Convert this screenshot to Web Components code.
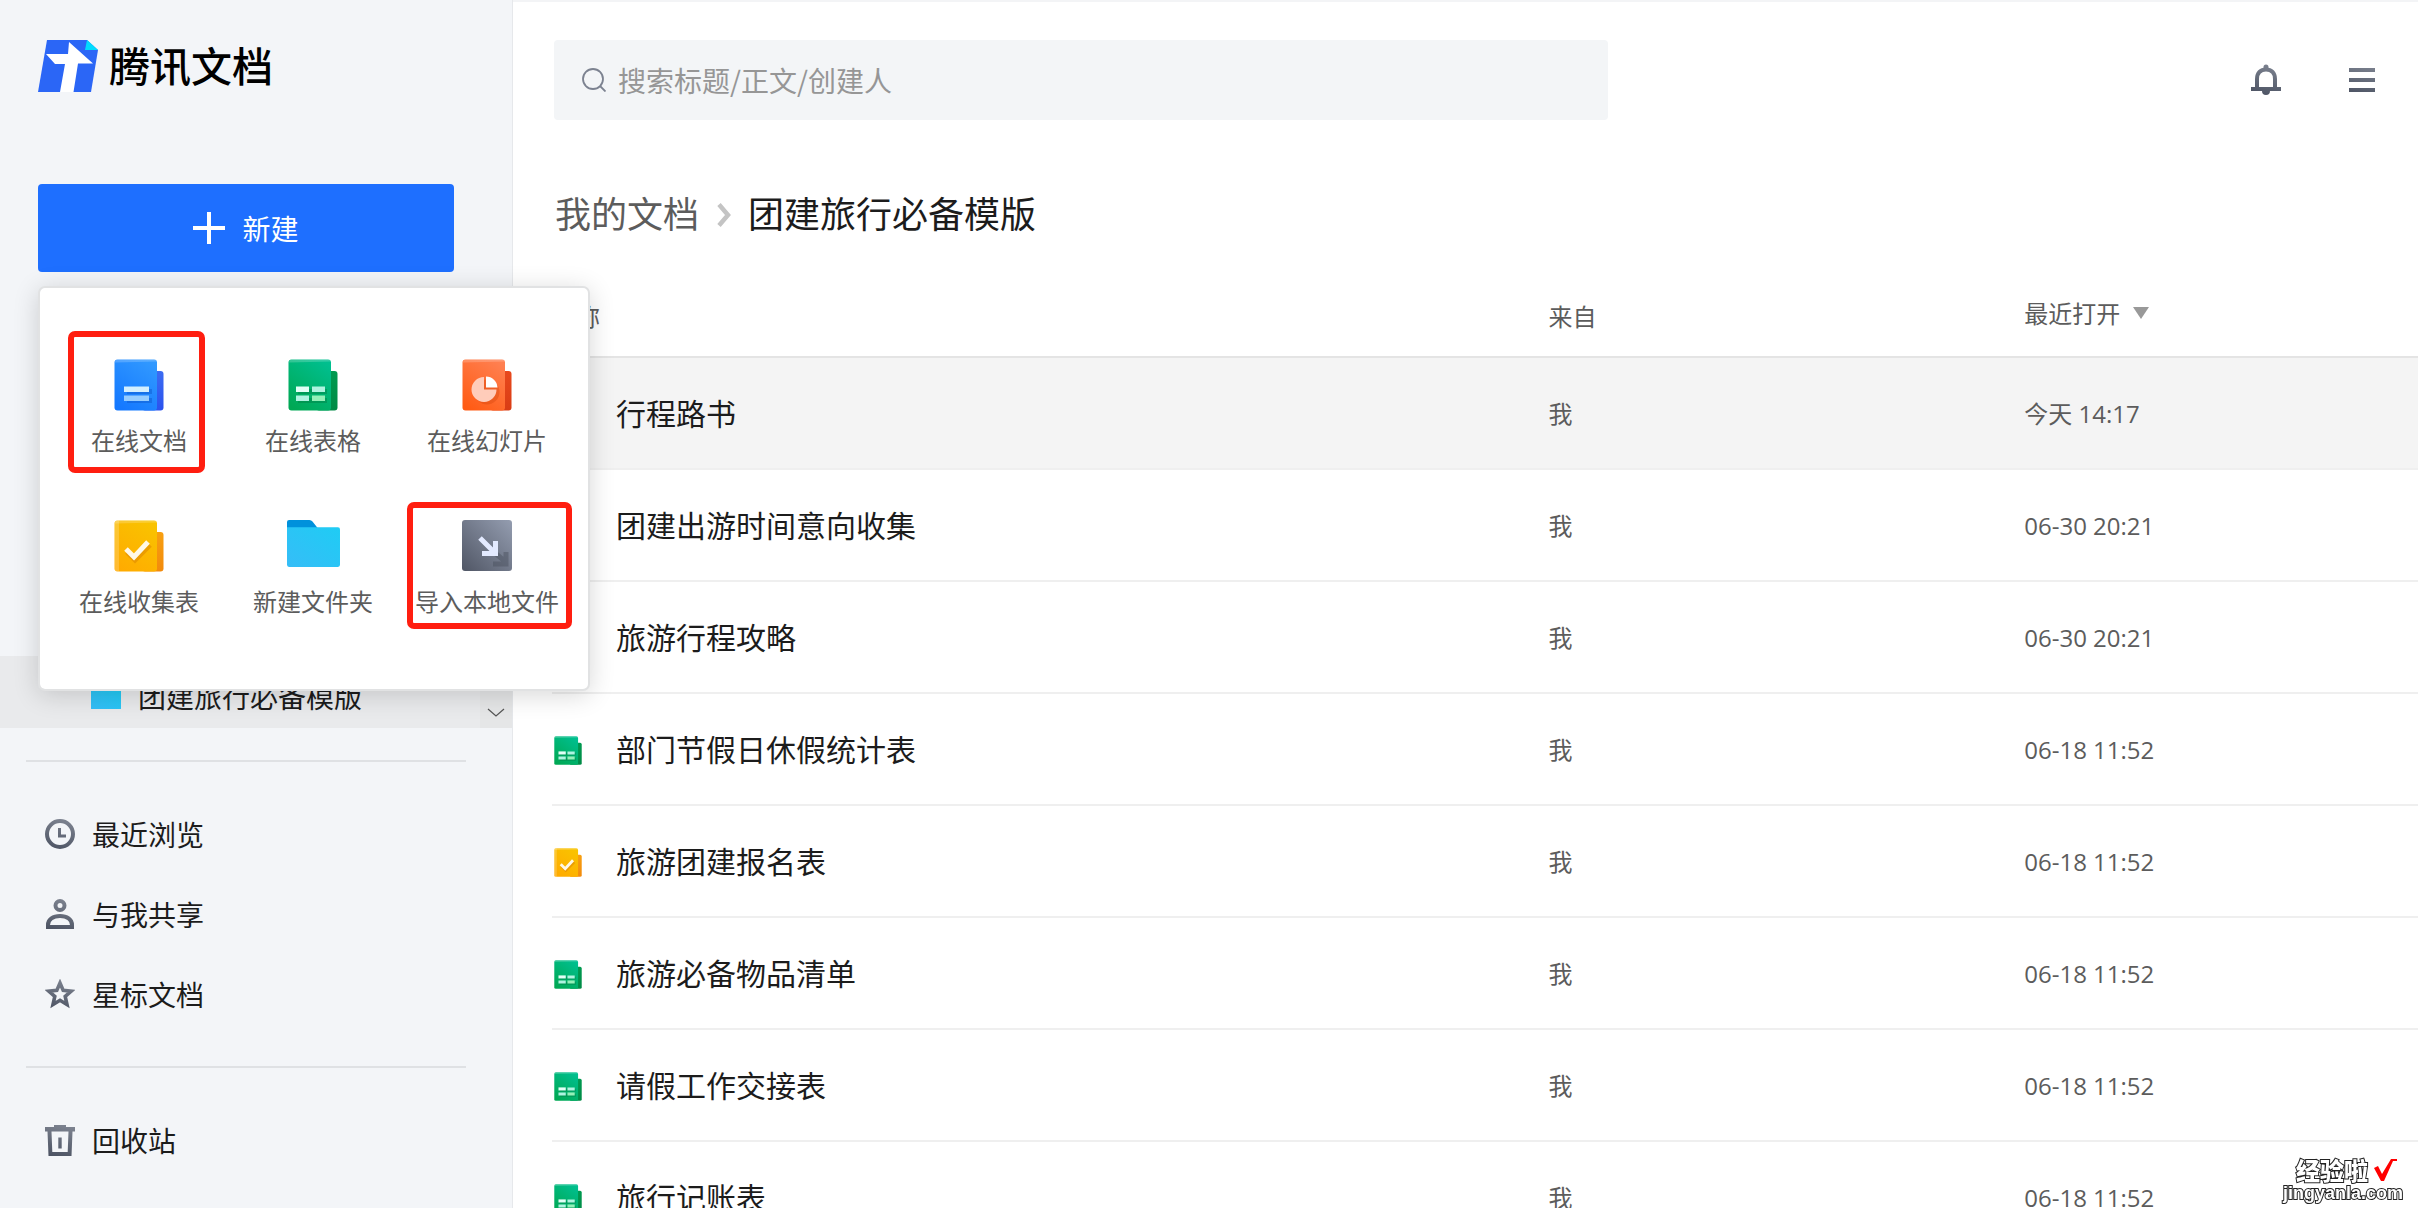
<!DOCTYPE html>
<html lang="zh-CN">
<head>
<meta charset="utf-8">
<title>腾讯文档</title>
<style>
  html, body { margin: 0; height: 100%; }
  body {
    font-family: "Noto Sans CJK SC", sans-serif;
    font-size: 28px;
    color: #1c1c1c;
    background: #fff;
    overflow: hidden;
  }
</style>
</head>
<body>
<docs-app>
  <docs-sidebar slot="side">
    <new-menu slot="create">
      <menu-tile icon="doc">在线文档</menu-tile>
      <menu-tile icon="sheet">在线表格</menu-tile>
      <menu-tile icon="slide">在线幻灯片</menu-tile>
      <menu-tile icon="form">在线收集表</menu-tile>
      <menu-tile icon="folder">新建文件夹</menu-tile>
      <menu-tile icon="import">导入本地文件</menu-tile>
    </new-menu>
    <side-item slot="tree" icon="folder" nested active>团建旅行必备模版</side-item>
    <side-item slot="main" icon="clock">最近浏览</side-item>
    <side-item slot="main" icon="person">与我共享</side-item>
    <side-item slot="main" icon="star">星标文档</side-item>
    <side-item slot="foot" icon="trash">回收站</side-item>
  </docs-sidebar>
  <docs-topbar></docs-topbar>
  <docs-breadcrumb><a slot="parent" href="#">我的文档</a>团建旅行必备模版</docs-breadcrumb>
  <file-table></file-table>
</docs-app>
<site-mark></site-mark>

<script>
const define = (name, html, setup) => {
  const template = document.createElement('template');
  template.innerHTML = html;
  customElements.define(name, class extends HTMLElement {
    connectedCallback() {
      if (this.shadowRoot) return;
      const root = this.attachShadow({ mode: 'open' });
      root.append(template.content.cloneNode(true));
      if (setup) setup(this, root);
    }
  });
};

const makeIcon = (name) => {
  const icon = document.createElement('docs-icon');
  icon.setAttribute('name', name);
  return icon;
};

const sheetBody = (top, bottom, backTop, backBottom, mark) => `
<svg viewBox="0 0 50 52" aria-hidden="true">
  <defs>
    <linearGradient id="a" x1=".8" y1="0" x2=".2" y2="1"><stop stop-color="${top}"/><stop offset="1" stop-color="${bottom}"/></linearGradient>
    <linearGradient id="b" x1="0" y1="0" x2="0" y2="1"><stop stop-color="${backTop}"/><stop offset="1" stop-color="${backBottom}"/></linearGradient>
  </defs>
  <rect x="28" y="12" width="21.5" height="39.5" rx="3" fill="url(#b)"/>
  <rect x=".5" y=".5" width="42.5" height="51" rx="3" fill="url(#a)"/>
  <path d="M1 3.500a3 3 0 0 1 3-3h36a3 3 0 0 1 3 2z" fill="#fff" opacity=".2"/>
  ${mark}
</svg>`;

const ink = `<defs><linearGradient id="k" gradientUnits="userSpaceOnUse" x1="20" y1="0" x2="12" y2="32"><stop stop-color="#7d8390"/><stop offset="1" stop-color="#4c5363"/></linearGradient></defs>`;

const ICONS = {
  doc: sheetBody('#3199ff', '#1478ff', '#3c6cf2', '#2b52ee',
    `<path d="M13 30h25v5H13zM13 39h25v5H13z" fill="#0b4fc4" opacity=".4"/>
     <path d="M10 27.500h25v5.500H10z" fill="#d3efff"/><path d="M10 36.500h25v5.500H10z" fill="#96cdff"/>`),
  sheet: sheetBody('#00bf8f', '#00a854', '#009a50', '#008a45',
    `<path d="M10 30h29v5H10zM10 39h29v5H10z" fill="#00703a" opacity=".35"/>
     <path d="M8 27.500h13v5.500H8z" fill="#e2fff6"/><path d="M24 27.500h13v5.500H24zM8 36.500h13v5.500H8z" fill="#aef3e0"/><path d="M24 36.500h13v5.500H24z" fill="#93f0b8"/>`),
  slide: sheetBody('#ff8051', '#ff5b14', '#e8491d', '#d93c14',
    `<circle cx="25" cy="33" r="12.500" fill="#c83a08" opacity=".3"/>
     <path d="M22 18a12.500 12.500 0 1 0 12.500 12.500H22z" fill="#ffccba"/><path d="M24 17.500a11.500 11.500 0 0 1 11.500 11H24z" fill="#fff"/>`),
  form: sheetBody('#f9c300', '#ffab00', '#f8a010', '#f28a0c',
    `<path d="M.5 3.500a3 3 0 0 1 3-3H5v51H3.500a3 3 0 0 1-3-3z" fill="#fff" opacity=".2"/>
     <path d="M13 32l8 8 15-15" fill="none" stroke="#d98200" stroke-width="5" opacity=".5"/>
     <path d="M12 29l8 8 14-15" fill="none" stroke="#fff8e6" stroke-width="5"/>`),
  folder: `<svg viewBox="0 0 52 46" aria-hidden="true"><defs><linearGradient id="f" x1="0" y1="1" x2="1" y2="0"><stop stop-color="#36bdf7"/><stop offset="1" stop-color="#1fccf4"/></linearGradient></defs>
    <path d="M0 2a2 2 0 0 1 2-2h20a4 4 0 0 1 3 1.500L31 9H0z" fill="#0091dc"/><path d="M0 7h50a2 2 0 0 1 2 2v35a2 2 0 0 1-2 2H2a2 2 0 0 1-2-2z" fill="url(#f)"/></svg>`,
  import: `<svg viewBox="0 0 50 51" aria-hidden="true"><defs><linearGradient id="i" x1="1" y1="0" x2="0" y2="1"><stop stop-color="#949db0"/><stop offset="1" stop-color="#505665"/></linearGradient></defs>
    <rect width="50" height="51" rx="3" fill="url(#i)"/>
    <g fill="none" stroke-width="5"><path d="M33 33l12 10M44 32v12H31" stroke="#474d5b" opacity=".45"/>
    <path d="M18 18l15 15M33.500 21v12.500H20" stroke="#e3eaff"/></g></svg>`,
  clock: `<svg viewBox="0 0 30 30" aria-hidden="true">${ink}<g fill="none" stroke="url(#k)"><circle cx="15" cy="15" r="13" stroke-width="4"/><path d="M14.500 9v8H21" stroke-width="3"/></g></svg>`,
  person: `<svg viewBox="0 0 30 30" aria-hidden="true">${ink}<g fill="none" stroke="url(#k)" stroke-width="4"><circle cx="15" cy="6.500" r="4.500"/><path d="M3 28v-2c0-5.500 5-9 12-9s12 3.500 12 9v2z"/></g></svg>`,
  star: `<svg viewBox="0 0 30 30" aria-hidden="true">${ink}<path d="M15 4l3.200 7.400 8 .8-6 5.300 1.800 8L15 21.300 8 25.500l1.800-8-6-5.300 8-.8z" fill="none" stroke="url(#k)" stroke-width="3.600"/></svg>`,
  trash: `<svg viewBox="0 0 30 31" aria-hidden="true">${ink}<path d="M9 0h12v2h9v4.500h-2.500L26.500 31h-23L2.500 6.500H0V2h9zM6.500 6.500L7.300 27h15.400l.8-20.500zM13.300 12.500h3.400v11h-3.400z" fill="url(#k)" fill-rule="evenodd"/></svg>`
};

define('docs-icon', `<style>
  :host { display: block; flex: none; width: 30px; }
  svg { display: block; width: 100%; height: auto; }
</style>`, (host, root) => root.append(
  document.createRange().createContextualFragment(ICONS[host.getAttribute('name')])));

define('docs-app', `<style>
  :host { display: flex; height: 100vh; overflow: hidden; }
  main { flex: 1; min-width: 0; border-top: 2px solid #f3f4f6; overflow: hidden; }
</style>
<slot name="side"></slot><main><slot></slot></main>`);

define('docs-sidebar', `<style>
  :host { display: flex; flex-direction: column; flex: none; width: 512px; background: #f3f5f8; border-right: 1px solid #e6e8eb; }
  .brand { display: flex; align-items: flex-start; gap: 11px; height: 52px; margin: 40px 38px 92px; }
  .brand svg { width: 60px; height: 52px; }
  .brand h1 { margin: 0; font-size: 41px; line-height: 48px; font-weight: 500; color: #000; }
  .tree { display: flex; height: 424px; margin-top: 32px; overflow: hidden; }
  .list { flex: 1; padding-top: 352px; }
  .scroll { display: flex; flex: none; align-items: flex-end; width: 32px; background: #e5e6e7; border: 0; padding: 0 0 8px; }
  .scroll svg { width: 32px; height: 14px; }
  hr { width: 440px; height: 2px; margin: 32px 26px 32px; border: 0; background: #dfe1e4; flex: none; }
</style>
<div class="brand">
  <svg viewBox="0 0 60 52" aria-hidden="true"><path d="M9 0h40l11 10-7 42H0z" fill="#2b66f6"/><path d="M49 0l11 10H47z" fill="#00dcff"/><path d="M31 2l24 21.500H40L35.500 52H22l5-28H17L8 14h22z" fill="#fff"/></svg>
  <h1>腾讯文档</h1>
</div>
<slot name="create"></slot>
<div class="tree"><div class="list"><slot name="tree"></slot></div>
  <button class="scroll" aria-label="向下滚动"><svg viewBox="0 0 32 14" fill="none" stroke="#555" stroke-width="1.200"><path d="M8 3l8 7 8-7"/></svg></button></div>
<hr><nav><slot name="main"></slot></nav><hr><nav><slot name="foot"></slot></nav>`);

define('side-item', `<style>
  :host { display: block; }
  a { display: flex; align-items: center; gap: 17px; height: 80px; padding-left: 45px; color: #1c1c1c; text-decoration: none; font-size: 28px; line-height: 40px; white-space: nowrap; }
  :host([nested]) a { padding-left: 91px; }
  :host([active]) a { background: #e9eaec; }
</style><a href="#"><span><slot></slot></span></a>`,
(host, root) => root.querySelector('a').prepend(makeIcon(host.getAttribute('icon'))));

define('new-menu', `<style>
  :host { display: block; position: relative; margin: 0 58px 0 38px; }
  .create { display: flex; align-items: center; justify-content: center; gap: 17px; width: 100%; height: 88px; border: 0; border-radius: 4px; background: #1e6fff; color: #fff; font: inherit; font-size: 28px; line-height: 40px; }
  .create svg { width: 32px; height: 32px; }
  .panel { position: absolute; z-index: 2; left: 0; top: 102px; box-sizing: border-box; width: 552px; padding: 71px 14px 70px 12px; display: grid; grid-template-columns: repeat(3, 1fr); row-gap: 62px; background: #fff; background-clip: padding-box; border: 2px solid #e1e2e3; border-radius: 7px; box-shadow: 0 4px 26px rgba(0,0,0,.16); }
  .ring { position: absolute; box-sizing: border-box; border: 6px solid #ff1e10; border-radius: 7px; pointer-events: none; }
  .ring.doc { left: 28px; top: 43px; width: 137px; height: 142px; }
  .ring.import { left: 367px; top: 214px; width: 165px; height: 127px; }
</style>
<button class="create"><svg viewBox="0 0 32 32" aria-hidden="true"><path d="M16 0v32M0 16h32" stroke="#fff" stroke-width="4"/></svg>新建</button>
<div class="panel"><slot></slot><span class="ring doc"></span><span class="ring import"></span></div>`);

define('menu-tile', `<style>
  :host { display: block; }
  button { display: flex; flex-direction: column; align-items: center; gap: 11px; width: 100%; padding: 0; border: 0; background: none; font: inherit; font-size: 24px; line-height: 36px; color: #5c5c5c; white-space: nowrap; }
  .pic { height: 52px; }
  docs-icon { width: 50px; }
  :host([icon="folder"]) docs-icon { width: 53px; }
</style><button><span class="pic"></span><span><slot></slot></span></button>`,
(host, root) => root.querySelector('.pic').append(makeIcon(host.getAttribute('icon'))));

define('docs-topbar', `<style>
  :host { display: flex; align-items: center; padding: 38px 43px 0 41px; }
  label { display: flex; align-items: center; flex: 0 1 1054px; box-sizing: border-box; height: 80px; padding: 0 28px; gap: 12px; background: #f3f5f7; border-radius: 4px; }
  label svg { flex: none; width: 24px; height: 24px; }
  input { flex: 1; min-width: 0; padding: 0; border: 0; outline: 0; background: none; font: inherit; font-size: 28px; line-height: 40px; color: #1c1c1c; }
  input::placeholder { color: #969696; opacity: 1; }
  .tools { display: flex; align-items: center; gap: 68px; margin-left: auto; }
  .tools button { padding: 0; border: 0; background: none; }
  .tools svg { display: block; height: 32px; }
</style>
<label><svg viewBox="0 0 24 24" fill="none" stroke="#7c8290" stroke-width="1.800" aria-hidden="true"><circle cx="11" cy="11" r="10"/><path d="M18 18l5.500 5.500"/></svg>
<input type="search" placeholder="搜索标题/正文/创建人" aria-label="搜索"></label>
<div class="tools">
  <button aria-label="通知"><svg width="30" viewBox="0 0 30 32">${ink}<path d="M6 24V15c0-6 3.500-9.500 9-9.500s9 3.500 9 9.500v9" fill="none" stroke="url(#k)" stroke-width="4"/><path d="M0 23h30v4H19a4 4 0 0 1-8 0H0zM12.500 4.500V3a2.500 2.500 0 0 1 5 0v1.500z" fill="url(#k)"/></svg></button>
  <button aria-label="菜单"><svg width="26" viewBox="0 0 26 32">${ink}<path d="M0 4h26v4H0zM0 14h26v4H0zM0 24h26v4H0z" fill="url(#k)"/></svg></button>
</div>`);

define('docs-breadcrumb', `<style>
  :host { display: flex; align-items: center; height: 48px; margin-top: 68px; padding-left: 42px; font-size: 36px; line-height: 48px; color: #1c1c1c; }
  svg { width: 14px; height: 24px; margin: 6px 17px 0 18px; }
  ::slotted(a) { color: #5c5c5c; text-decoration: none; }
</style><slot name="parent"></slot><svg viewBox="0 0 14 24" fill="none" stroke="#c4c4c4" stroke-width="4.500" aria-hidden="true"><path d="M2 1.500L11 12 2 22.500"/></svg><span><slot></slot></span>`);

const FILES = [
  ['doc', '行程路书', '今天 14:17'],
  ['form', '团建出游时间意向收集', '06-30 20:21'],
  ['doc', '旅游行程攻略', '06-30 20:21'],
  ['sheet', '部门节假日休假统计表', '06-18 11:52'],
  ['form', '旅游团建报名表', '06-18 11:52'],
  ['sheet', '旅游必备物品清单', '06-18 11:52'],
  ['sheet', '请假工作交接表', '06-18 11:52'],
  ['sheet', '旅行记账表', '06-18 11:52']
];

define('file-table', `<style>
  :host { display: block; margin: 42px 0 0 39px; }
  table { width: 100%; table-layout: fixed; border-collapse: separate; border-spacing: 0; }
  .name { width: 53.4%; } .from { width: 25.5%; }
  th, td { padding: 0; text-align: left; vertical-align: middle; font-size: 24px; line-height: 36px; font-weight: 400; color: #5c5c5c; }
  th { height: 76px; padding-bottom: 2px; border-bottom: 2px solid #e4e4e4; }
  td { height: 110px; border-bottom: 2px solid #efefef; }
  tbody tr:first-child td { background: #f4f4f4; }
  .sort { display: flex; align-items: center; gap: 13px; padding: 0 0 6px; border: 0; background: none; font: inherit; color: inherit; }
  .sort svg { width: 16px; height: 12px; }
  .file { display: flex; align-items: center; gap: 34px; padding-left: 2px; font-size: 30px; line-height: 44px; color: #1c1c1c; text-decoration: none; white-space: nowrap; }
  .file docs-icon { width: 28px; padding-top: 4px; }
  .file span { padding-bottom: 2px; }
  time { font-family: "Open Sans", "Noto Sans CJK SC", sans-serif; }
</style>
<table>
  <colgroup><col class="name"><col class="from"><col></colgroup>
  <thead><tr><th>名称</th><th>来自</th><th><button class="sort">最近打开<svg viewBox="0 0 16 12" aria-hidden="true"><path d="M0 0h16L8 12z" fill="#999"/></svg></button></th></tr></thead>
  <tbody>${FILES.map(([icon, name, time]) => `<tr><td><a class="file" href="#"><docs-icon name="${icon}"></docs-icon><span>${name}</span></a></td><td>我</td><td><time>${time}</time></td></tr>`).join('')}</tbody>
</table>`);

define('site-mark', `<style>
  :host { position: fixed; z-index: 3; right: 15px; bottom: 5px; display: flex; flex-direction: column; align-items: flex-end; color: #fff; pointer-events: none; }
  div { display: flex; align-items: center; gap: 5px; padding-right: 6px; font-size: 24px; line-height: 26px; font-weight: 900; }
  div svg { width: 24px; height: 24px; }
  span, p { margin: 0; -webkit-text-stroke: 2px #222; paint-order: stroke fill; }
  p { font: bold 18px/20px "Liberation Sans", sans-serif; }
</style>
<div><span>经验啦</span><svg viewBox="0 0 24 24" aria-hidden="true"><path d="M1 10l4-2 4 8L18 1h6v2h-4L11 23H8z" fill="#f00"/></svg></div><p>jingyanla.com</p>`);
</script>
</body>
</html>
